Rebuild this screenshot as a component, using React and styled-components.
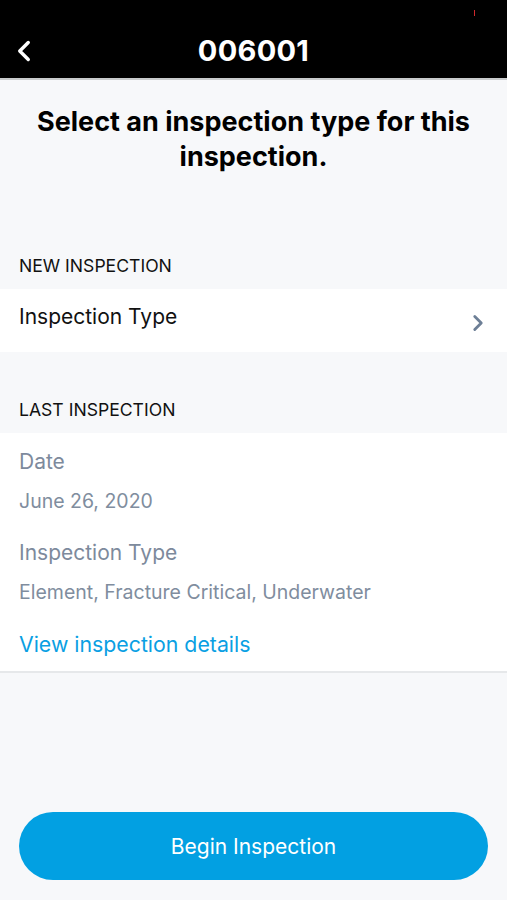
import React from "react";
import styled, { createGlobalStyle } from "styled-components";
import { ChevronLeft, ChevronRight } from "lucide-react";

const GlobalStyle = createGlobalStyle`
  html, body {
    margin: 0;
    padding: 0;
    background: #f7f8fa;
    font-family: Inter, "Noto Sans", sans-serif;
  }
`;

const App = () => {
  return (
    <Page>
      <GlobalStyle />
      <Header>
        <BackButton>
          <ChevronLeft size={34} strokeWidth={2.4} />
        </BackButton>
        <Title>006001</Title>
        <RecDot />
      </Header>
      <Heading>Select an inspection type for this inspection.</Heading>

      <SectionLabel $gap={81}>NEW INSPECTION</SectionLabel>
      <SelectRow>
        <RowText>Inspection Type</RowText>
        <Chevron size={26} strokeWidth={2.6} />
      </SelectRow>

      <SectionLabel $gap={47}>LAST INSPECTION</SectionLabel>
      <Card>
        <FieldLabel>Date</FieldLabel>
        <FieldValue>June 26, 2020</FieldValue>
        <FieldLabel>Inspection Type</FieldLabel>
        <FieldValue>Element, Fracture Critical, Underwater</FieldValue>
        <DetailsLink>View inspection details</DetailsLink>
      </Card>

      <Footer>
        <PrimaryButton>Begin Inspection</PrimaryButton>
      </Footer>
    </Page>
  );
};

const Page = styled.div`
  width: 507px;
  height: 900px;
  display: flex;
  flex-direction: column;
  background: #f7f8fa;
  overflow: hidden;
`;

const Header = styled.div`
  position: relative;
  height: 80px;
  background: #000;
  border-bottom: 2px solid #c9cbcd;
  display: flex;
  align-items: flex-end;
  justify-content: center;
  padding-bottom: 10px;
  box-sizing: border-box;
  flex-shrink: 0;
`;

const BackButton = styled.div`
  position: absolute;
  left: 7px;
  bottom: 10px;
  color: #fff;
  display: flex;
`;

const Title = styled.div`
  color: #fff;
  font-size: 29px;
  font-weight: 700;
  letter-spacing: 0.3px;
`;

const RecDot = styled.div`
  position: absolute;
  top: 10px;
  left: 474px;
  width: 1px;
  height: 6px;
  background: #d0282c;
`;

const Heading = styled.h1`
  margin: 24px 20px 0;
  text-align: center;
  font-size: 27px;
  line-height: 35px;
  font-weight: 700;
  color: #000;
`;

const SectionLabel = styled.div`
  margin-top: ${(p) => p.$gap}px;
  padding: 0 19px 13px;
  font-size: 17.6px;
  color: #111;
`;

const SelectRow = styled.div`
  height: 63px;
  background: #fff;
  display: flex;
  align-items: center;
  justify-content: space-between;
  padding: 0 19px;
`;

const RowText = styled.div`
  font-size: 21px;
  color: #111;
  margin-top: -8px;
`;

const Chevron = styled(ChevronRight)`
  color: #6d7f96;
  margin-top: 4px;
  margin-right: -3px;
`;

const Card = styled.div`
  background: #fff;
  border-bottom: 2px solid #e6e8ea;
  padding: 12px 19px 12px;
  display: flex;
  flex-direction: column;
`;

const FieldLabel = styled.div`
  font-size: 21px;
  color: #7d8a9c;
  line-height: 30px;
  margin-top: 2px;
  & ~ & {
    margin-top: 24px;
  }
`;

const FieldValue = styled.div`
  font-size: 19.5px;
  color: #808d9e;
  line-height: 26px;
  margin-top: 11px;
`;

const DetailsLink = styled.div`
  font-size: 21.3px;
  color: #0a9fe3;
  line-height: 30px;
  margin-top: 24px;
`;

const Footer = styled.div`
  margin-top: auto;
  padding: 0 19px 20px;
`;

const PrimaryButton = styled.div`
  height: 68px;
  border-radius: 34px;
  background: #02a0e2;
  color: #fff;
  font-size: 21px;
  display: flex;
  align-items: center;
  justify-content: center;
`;

export default App;
